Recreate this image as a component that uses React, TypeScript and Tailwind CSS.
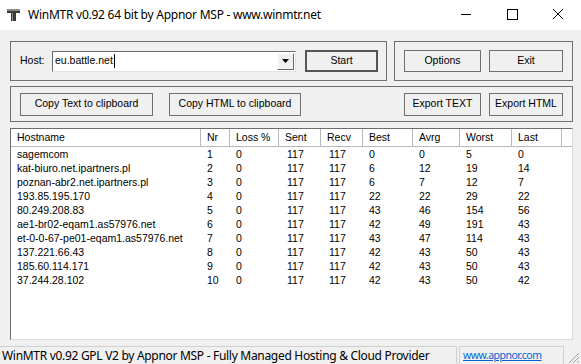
import React from "react";

type Hop = {
  host: string;
  nr: number;
  loss: number;
  sent: number;
  recv: number;
  best: number;
  avrg: number;
  worst: number;
  last: number;
};

const hops: Hop[] = [
  { host: "sagemcom", nr: 1, loss: 0, sent: 117, recv: 117, best: 0, avrg: 0, worst: 5, last: 0 },
  { host: "kat-biuro.net.ipartners.pl", nr: 2, loss: 0, sent: 117, recv: 117, best: 6, avrg: 12, worst: 19, last: 14 },
  { host: "poznan-abr2.net.ipartners.pl", nr: 3, loss: 0, sent: 117, recv: 117, best: 6, avrg: 7, worst: 12, last: 7 },
  { host: "193.85.195.170", nr: 4, loss: 0, sent: 117, recv: 117, best: 22, avrg: 22, worst: 29, last: 22 },
  { host: "80.249.208.83", nr: 5, loss: 0, sent: 117, recv: 117, best: 43, avrg: 46, worst: 154, last: 56 },
  { host: "ae1-br02-eqam1.as57976.net", nr: 6, loss: 0, sent: 117, recv: 117, best: 42, avrg: 49, worst: 191, last: 43 },
  { host: "et-0-0-67-pe01-eqam1.as57976.net", nr: 7, loss: 0, sent: 117, recv: 117, best: 43, avrg: 47, worst: 114, last: 43 },
  { host: "137.221.66.43", nr: 8, loss: 0, sent: 117, recv: 117, best: 42, avrg: 43, worst: 50, last: 43 },
  { host: "185.60.114.171", nr: 9, loss: 0, sent: 117, recv: 117, best: 42, avrg: 43, worst: 50, last: 43 },
  { host: "37.244.28.102", nr: 10, loss: 0, sent: 117, recv: 117, best: 42, avrg: 43, worst: 50, last: 42 },
];

const columns = ["Hostname", "Nr", "Loss %", "Sent", "Recv", "Best", "Avrg", "Worst", "Last"];

const gridCols = "grid grid-cols-[190px_29px_49px_42px_42px_50px_47px_52px_50px_1fr]";

type ButtonProps = {
  label: string;
  className?: string;
};

const WinButton = ({ label, className = "" }: ButtonProps) => (
  <div
    className={`flex h-[22px] items-center justify-center border border-[#6f6f6f] bg-[#f0f0f0] text-[10.5px] text-black ${className}`}
  >
    {label}
  </div>
);

export default function App() {
  return (
    <div
      className="flex h-[364px] w-[581px] flex-col overflow-hidden bg-[#f0f0f0] text-black"
      style={{ fontFamily: '"Liberation Sans", Arial, sans-serif' }}
    >
      {/* title bar */}
      <div
        className="flex h-[30px] items-center bg-white text-[12px]"
        style={{ fontFamily: '"Noto Sans", sans-serif' }}
      >
        <svg width="13" height="12" viewBox="0 0 13 12" className="ml-[7px]">
          <rect x="0" y="0" width="13" height="2" fill="#8a8a8a" />
          <rect x="0" y="2" width="13" height="2" fill="#3a3a3a" />
          <rect x="4" y="4" width="5" height="8" fill="#3a3a3a" />
          <rect x="5" y="4" width="1" height="8" fill="#8a8a8a" />
        </svg>
        <span className="ml-[8px] tracking-[-0.25px]">WinMTR v0.92 64 bit by Appnor MSP - www.winmtr.net</span>
        <div className="ml-auto flex h-full items-center">
          <svg width="46" height="30" viewBox="0 0 46 30">
            <line x1="18" y1="14.5" x2="28" y2="14.5" stroke="#000" strokeWidth="1" />
          </svg>
          <svg width="46" height="30" viewBox="0 0 46 30">
            <rect x="18.5" y="9.5" width="10" height="10" fill="none" stroke="#000" strokeWidth="1" />
          </svg>
          <svg width="46" height="30" viewBox="0 0 46 30">
            <line x1="18" y1="9" x2="28" y2="19" stroke="#000" strokeWidth="1" />
            <line x1="28" y1="9" x2="18" y2="19" stroke="#000" strokeWidth="1" />
          </svg>
        </div>
      </div>

      {/* first row of group boxes */}
      <div className="mt-[11px] flex h-[40px] pl-[10px]">
        <div className="flex w-[377px] items-center border border-[#6f6f6f] pl-[9px]">
          <span className="w-[32px] text-[10.5px]">Host:</span>
          <div className="flex h-[21px] w-[244px] items-center border border-t-[#696969] border-l-[#696969] border-b-[#e3e3e3] border-r-[#e3e3e3] bg-white">
            <span className="pl-[2px] text-[10.5px]">eu.battle.net</span>
            <span className="ml-[1px] h-[14px] w-[1px] bg-black" />
            <div className="ml-auto mr-[1px] flex h-[17px] w-[17px] items-center justify-center border border-t-[#ffffff] border-l-[#ffffff] border-b-[#696969] border-r-[#696969] bg-[#f0f0f0]">
              <svg width="7" height="4" viewBox="0 0 7 4">
                <polygon points="0,0 7,0 3.5,4" fill="#000" />
              </svg>
            </div>
          </div>
          <div className="ml-[9px] flex h-[22px] w-[73px] items-center justify-center border-2 border-[#555555] text-[10.5px]">
            Start
          </div>
        </div>
        <div className="ml-[7px] flex w-[179px] items-center justify-end gap-[8px] border border-[#6f6f6f] pr-[9px]">
          <WinButton label="Options" className="w-[77px]" />
          <WinButton label="Exit" className="w-[74px]" />
        </div>
      </div>

      {/* second row */}
      <div className="mt-[5px] ml-[10px] flex h-[36px] w-[563px] items-center border border-[#6f6f6f] px-[9px]">
        <WinButton label="Copy Text to clipboard" className="h-[23px] w-[133px]" />
        <WinButton label="Copy HTML to clipboard" className="ml-[16px] h-[23px] w-[132px]" />
        <div className="ml-auto flex gap-[8px]">
          <WinButton label="Export TEXT" className="h-[23px] w-[77px]" />
          <WinButton label="Export HTML" className="h-[23px] w-[74px]" />
        </div>
      </div>

      {/* list view */}
      <div className="mt-[6px] ml-[10px] h-[212px] w-[563px] border border-t-[#6d6d6d] border-l-[#6d6d6d] border-b-[#d9d9d9] border-r-[#d9d9d9] bg-white text-[10.5px]">
        <div className={`${gridCols} h-[18px] border-b border-[#b9b9b9]`}>
          {columns.map((c) => (
            <div key={c} className="flex items-center border-r border-[#b9b9b9] pl-[6px]">
              {c}
            </div>
          ))}
          <div />
        </div>
        {hops.map((h) => (
          <div key={h.nr} className={`${gridCols} h-[14px] items-center leading-[14px]`}>
            <div className="pl-[6px]">{h.host}</div>
            <div className="pl-[6px]">{h.nr}</div>
            <div className="pl-[6px]">{h.loss}</div>
            <div className="pl-[8px]">{h.sent}</div>
            <div className="pl-[8px]">{h.recv}</div>
            <div className="pl-[6px]">{h.best}</div>
            <div className="pl-[6px]">{h.avrg}</div>
            <div className="pl-[6px]">{h.worst}</div>
            <div className="pl-[6px]">{h.last}</div>
            <div />
          </div>
        ))}
      </div>

      {/* status bar */}
      <div
        className="mt-[6px] flex h-[18px] items-stretch text-[12px]"
        style={{ fontFamily: '"Noto Sans", sans-serif' }}
      >
        <div className="flex w-[457px] items-center border-t border-r border-[#d0d0d0] pl-[2px]">
          <span className="tracking-[-0.3px]">WinMTR v0.92 GPL V2 by Appnor MSP - Fully Managed Hosting &amp; Cloud Provider</span>
        </div>
        <div className="ml-[2px] flex w-[105px] items-center overflow-hidden whitespace-nowrap border-t border-r border-l border-[#d0d0d0] pl-[3px]">
          <span className="text-[10.5px] text-[#0066cc] underline tracking-[-0.5px]">www.appnor.com</span>
        </div>
        <div className="relative flex-1">
          <svg width="14" height="14" viewBox="0 0 14 14" className="absolute right-[1px] bottom-0">
            <line x1="13" y1="3" x2="3" y2="13" stroke="#a0a0a0" />
            <line x1="13" y1="7" x2="7" y2="13" stroke="#a0a0a0" />
            <line x1="13" y1="11" x2="11" y2="13" stroke="#a0a0a0" />
          </svg>
        </div>
      </div>
    </div>
  );
}
